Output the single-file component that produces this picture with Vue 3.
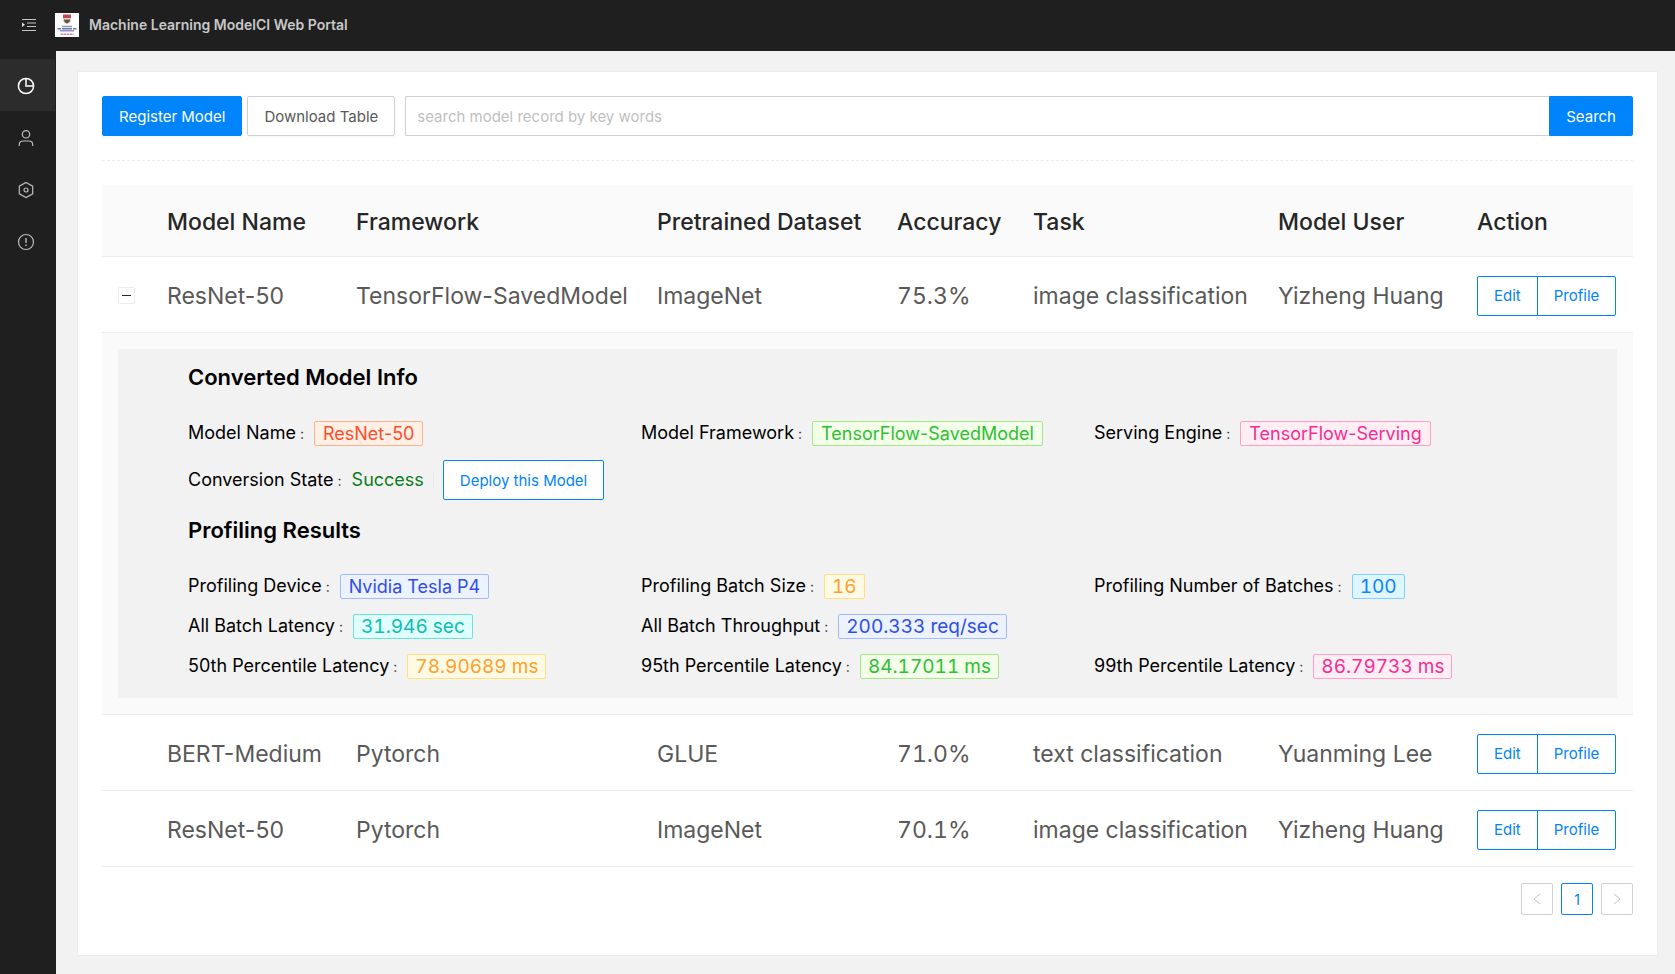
<script setup>
import { ref } from 'vue'

const keywords = ref('')
const expanded = ref(true)

const columns = ['Model Name', 'Framework', 'Pretrained Dataset', 'Accuracy', 'Task', 'Model User', 'Action']

const models = [
  {
    id: 1,
    cells: ['ResNet-50', 'TensorFlow-SavedModel', 'ImageNet', '75.3%', 'image classification', 'Yizheng Huang'],
    detail: true,
  },
  {
    id: 2,
    cells: ['BERT-Medium', 'Pytorch', 'GLUE', '71.0%', 'text classification', 'Yuanming Lee'],
  },
  {
    id: 3,
    cells: ['ResNet-50', 'Pytorch', 'ImageNet', '70.1%', 'image classification', 'Yizheng Huang'],
  },
]

const conversion = [
  { label: 'Model Name', value: 'ResNet-50', tone: 'volcano' },
  { label: 'Model Framework', value: 'TensorFlow-SavedModel', tone: 'green' },
  { label: 'Serving Engine', value: 'TensorFlow-Serving', tone: 'magenta' },
]

const profiling = [
  { label: 'Profiling Device', value: 'Nvidia Tesla P4', tone: 'geekblue' },
  { label: 'Profiling Batch Size', value: '16', tone: 'gold', numeric: true },
  { label: 'Profiling Number of Batches', value: '100', tone: 'blue', numeric: true },
  { label: 'All Batch Latency', value: '31.946 sec', tone: 'cyan', numeric: true },
  { label: 'All Batch Throughput', value: '200.333 req/sec', tone: 'geekblue', numeric: true, wide: true },
  { label: '50th Percentile Latency', value: '78.90689 ms', tone: 'gold', numeric: true },
  { label: '95th Percentile Latency', value: '84.17011 ms', tone: 'green', numeric: true },
  { label: '99th Percentile Latency', value: '86.79733 ms', tone: 'magenta', numeric: true },
]
</script>

<template>
  <div class="app">
    <header class="topbar">
      <button class="fold" type="button" aria-label="Toggle menu">
        <svg width="14" height="12" viewBox="0 0 14 12" fill="none" stroke="#c4c4c4">
          <path d="M0 .5h14M5 4h9M5 7.500h9M0 11.500h14" />
          <path d="M0 3.500v4.600L3 5.800z" fill="#e0e0e0" stroke="none" />
        </svg>
      </button>
      <svg class="logo" width="24" height="24" viewBox="0 0 24 24">
        <rect width="24" height="24" fill="#fff" />
        <path d="M8 1.500h8v3.500H8z" fill="#c2485a" />
        <path d="M8 5h8v2.500q0 2-4 3.500q-4-1.500-4-3.500z" fill="#e2d3b8" />
        <path d="M9 6l2 1 1-1 1 1 2-1-.5 3L12 10.500l-2.500-1.500z" fill="#6b5140" />
        <path d="M7 13.500h10M5 17.800h14" stroke="#8d94bc" stroke-width="1.500" />
        <path d="M2.500 15.700h3.500M7 15.700h10M18 15.700h3.500" stroke="#6b75ab" stroke-width="1.600" />
        <path d="M5.500 21.300h13" stroke="#e8829a" stroke-width="1.400" stroke-dasharray="2.500 .5" />
      </svg>
      <h1 class="brand">Machine Learning ModelCI Web Portal</h1>
    </header>

    <div class="body">
      <nav class="sidebar" aria-label="Main">
        <a class="nav active" href="#dashboard" aria-label="Dashboard">
          <svg width="18" height="18" viewBox="0 0 18 18" fill="none" stroke="#fff" stroke-width="1.500">
            <circle cx="9" cy="9" r="7.600" />
            <path d="M9 1.400V9h7.600" />
          </svg>
        </a>
        <a class="nav" href="#users" aria-label="Users">
          <svg width="18" height="18" viewBox="0 0 18 18" fill="none" stroke="#bdbdbd" stroke-width="1.200">
            <circle cx="9" cy="5.300" r="3.700" />
            <path d="M2.300 17v-1.500q0-3.500 4-3.500h5.400q4 0 4 3.500V17" />
          </svg>
        </a>
        <a class="nav" href="#services" aria-label="Services">
          <svg width="18" height="18" viewBox="0 0 18 18" fill="none" stroke="#bdbdbd" stroke-width="1.200">
            <path d="M9 1.500l6.700 3.700v7.600L9 16.500l-6.700-3.700V5.200z" />
            <circle cx="9" cy="9" r="2" />
          </svg>
        </a>
        <a class="nav" href="#about" aria-label="About">
          <svg width="18" height="18" viewBox="0 0 18 18" fill="none" stroke="#bdbdbd" stroke-width="1.200">
            <circle cx="9" cy="9" r="7.500" />
            <path d="M9 5v5M9 11.500v1.500" stroke-width="1.400" />
          </svg>
        </a>
      </nav>

      <main class="content">
        <section class="card">
          <div class="toolbar">
            <button class="btn primary" type="button">Register Model</button>
            <button class="btn" type="button">Download Table</button>
            <form class="search" @submit.prevent>
              <input v-model="keywords" type="text" aria-label="Search models" placeholder="search model record by key words" />
              <button class="btn primary" type="submit">Search</button>
            </form>
          </div>
          <hr class="divider" />

          <table class="models">
            <colgroup>
              <col class="c-toggle" />
              <col class="c-name" />
              <col class="c-framework" />
              <col class="c-dataset" />
              <col class="c-accuracy" />
              <col class="c-task" />
              <col class="c-user" />
              <col class="c-action" />
            </colgroup>
            <thead>
              <tr>
                <th></th>
                <th v-for="name in columns" :key="name" scope="col">{{ name }}</th>
              </tr>
            </thead>
            <tbody>
              <template v-for="model in models" :key="model.id">
                <tr>
                  <td>
                    <button
                      v-if="model.detail"
                      class="toggle"
                      type="button"
                      :aria-expanded="expanded"
                      aria-label="Toggle details"
                      @click="expanded = !expanded"
                    >
                      <svg width="9" height="9" viewBox="0 0 9 9" stroke="#262626"><path d="M0 4.500h9" /></svg>
                    </button>
                  </td>
                  <td v-for="(cell, i) in model.cells" :key="i" :class="{ figures: columns[i] === 'Accuracy' }">{{ cell }}</td>
                  <td>
                    <div class="group">
                      <button class="btn ghost" type="button">Edit</button>
                      <button class="btn ghost" type="button">Profile</button>
                    </div>
                  </td>
                </tr>
                <tr v-if="model.detail && expanded" class="detail-row">
                  <td colspan="8">
                    <div class="detail">
                      <h2>Converted Model Info</h2>
                      <dl class="facts">
                        <div v-for="fact in conversion" :key="fact.label" class="fact">
                          <dt>{{ fact.label }}</dt>
                          <dd><span class="tag" :class="fact.tone">{{ fact.value }}</span></dd>
                        </div>
                        <div class="fact state">
                          <dt>Conversion State</dt>
                          <dd>
                            <span class="success">Success</span>
                            <span class="bar"></span>
                            <button class="btn ghost" type="button">Deploy this Model</button>
                          </dd>
                        </div>
                      </dl>
                      <h2>Profiling Results</h2>
                      <dl class="facts">
                        <div v-for="fact in profiling" :key="fact.label" class="fact" :class="{ wide: fact.wide }">
                          <dt>{{ fact.label }}</dt>
                          <dd><span class="tag" :class="[fact.tone, { numeric: fact.numeric }]">{{ fact.value }}</span></dd>
                        </div>
                      </dl>
                    </div>
                  </td>
                </tr>
              </template>
            </tbody>
          </table>

          <nav class="pager" aria-label="Pagination">
            <button type="button" disabled aria-label="Previous page">
              <svg width="8" height="12" viewBox="0 0 8 12" fill="none" stroke="#c4c4c4"><path d="M7 1L1 6l6 5" /></svg>
            </button>
            <button class="current" type="button" aria-current="page">1</button>
            <button type="button" disabled aria-label="Next page">
              <svg width="8" height="12" viewBox="0 0 8 12" fill="none" stroke="#c4c4c4"><path d="M1 1l6 5-6 5" /></svg>
            </button>
          </nav>
        </section>
      </main>
    </div>
  </div>
</template>

<style>
body {
  background: #f2f2f2;
}
</style>

<style scoped>
.app,
.app * {
  box-sizing: border-box;
}
.app {
  display: flex;
  flex-direction: column;
  min-height: 100vh;
  font-family: Inter, "Noto Sans", sans-serif;
  font-size: 16px;
  color: #595959;
}
button,
input {
  font-family: inherit;
}
.topbar {
  display: flex;
  align-items: center;
  height: 51px;
  padding: 0 22px 2px;
  background: #1f1f1f;
  box-shadow: 0 1px 4px rgba(0, 21, 41, 0.12);
}
.fold {
  display: flex;
  padding: 0;
  border: 0;
  background: none;
}
.logo {
  margin-left: 19px;
}
.brand {
  margin: 0 0 0 10px;
  font-size: 14px;
  font-weight: 600;
  color: #c8c8c8;
}
.body {
  flex: 1;
  display: flex;
}
.sidebar {
  flex: none;
  width: 56px;
  padding: 8px 1px 0 0;
  background: #1f1f1f;
}
.nav {
  display: flex;
  align-items: center;
  justify-content: center;
  height: 52px;
  padding: 2px 3px 0 0;
}
.nav.active {
  background: #2c2c2c;
}
.content {
  flex: 1;
  min-width: 0;
  padding: 20px 17px 18px 21px;
  background: #f2f2f2;
}
.card {
  height: 100%;
  padding: 24px;
  border: 1px solid #ececec;
  background: #fff;
}
.toolbar {
  display: flex;
  gap: 5px;
}
.btn {
  height: 40px;
  padding: 0 16px;
  border: 1px solid #d0d0d0;
  border-radius: 2px;
  background: #fff;
  font-size: 15px;
  color: #595959;
  white-space: nowrap;
  box-shadow: 0 2px 0 rgba(0, 0, 0, 0.02);
}
.btn.primary {
  border-color: #0084fc;
  background: #0084fc;
  color: #fff;
}
.btn.ghost {
  border-color: #0084fc;
  color: #0084fc;
  box-shadow: none;
}
.search {
  flex: 1;
  display: flex;
  margin-left: 5px;
}
.search input {
  flex: 1;
  min-width: 0;
  height: 40px;
  padding: 0 11px;
  border: 1px solid #d0d0d0;
  border-right: 0;
  border-radius: 2px 0 0 2px;
  font-size: 15px;
  color: #595959;
}
.search input::placeholder {
  color: #bfbfbf;
}
.search .btn {
  border-radius: 0 2px 2px 0;
}
.divider {
  margin: 24px 0;
  border: 0;
  border-top: 1px dashed #ececec;
}
.models {
  width: 100%;
  border-collapse: separate;
  border-spacing: 0;
  table-layout: fixed;
  font-size: 23px;
  line-height: 36px;
}
.c-toggle { width: 49px; }
.c-name { width: 189px; }
.c-framework { width: 301px; }
.c-dataset { width: 240px; }
.c-accuracy { width: 136px; }
.c-task { width: 245px; }
.c-user { width: 199px; }
.c-action { width: 172px; }
.models th,
.models td {
  height: 76px;
  padding: 2px 16px 0;
  border-bottom: 1px solid #ececec;
  text-align: left;
  white-space: nowrap;
}
.models th {
  height: 72px;
  background: #fafafa;
  font-weight: 500;
  color: #262626;
}
.figures {
  font-variant-numeric: tabular-nums;
}
.toggle {
  display: flex;
  align-items: center;
  justify-content: center;
  width: 17px;
  height: 17px;
  padding: 0;
  border: 1px solid #ececec;
  border-radius: 2px;
  background: #fff;
}
.group {
  display: flex;
}
.group .btn:first-child {
  border-radius: 2px 0 0 2px;
}
.group .btn:last-child {
  margin-left: -1px;
  border-radius: 0 2px 2px 0;
}
.models .detail-row td {
  padding: 16px;
  background: #fafafa;
}
.detail {
  padding: 14px 70px 12px;
  background: #f2f2f2;
  color: #000;
}
.detail h2 {
  margin: 0 0 22px;
  font-size: 22px;
  line-height: 28px;
  font-weight: 600;
}
.facts {
  display: grid;
  grid-template-columns: repeat(3, 1fr);
  margin: 0;
  font-size: 18px;
  line-height: 24px;
}
.facts + h2 {
  margin-top: 9px;
}
.fact {
  display: flex;
  align-items: center;
  height: 40px;
}
.fact.state {
  height: 54px;
}
.fact.wide {
  grid-column: span 2;
}
.fact dt::after {
  content: ":";
  margin: 0 10px 0 4px;
  font-size: 14px;
  color: #333;
}
.fact dd {
  display: flex;
  align-items: center;
  margin: 0;
}
.tag {
  padding: 0 8px;
  border: 1px solid;
  border-radius: 2px;
  line-height: 23px;
}
.tag.numeric {
  padding: 0 7px;
  font-size: 19px;
  font-variant-numeric: tabular-nums;
}
.success {
  color: #0a7d1c;
}
.bar {
  width: 1px;
  height: 14px;
  margin: 0 9px;
  background: #e8e8e8;
}
.volcano { color: #ff4d29; background: #fff0e6; border-color: #ffb08c; }
.green { color: #2fbf34; background: #f3ffe8; border-color: #a4e888; }
.magenta { color: #f72c93; background: #ffeef4; border-color: #ff9fc8; }
.geekblue { color: #2f4de8; background: #ecf2ff; border-color: #a0bcff; }
.gold { color: #ff9f2e; background: #fffae4; border-color: #ffdf80; }
.blue { color: #0a84ff; background: #e0f6ff; border-color: #7ccfff; }
.cyan { color: #0cbcb8; background: #e0fffa; border-color: #66e4d8; }
.pager {
  display: flex;
  justify-content: flex-end;
  gap: 8px;
  margin-top: 16px;
}
.pager button {
  display: flex;
  align-items: center;
  justify-content: center;
  width: 32px;
  height: 32px;
  padding: 0;
  border: 1px solid #d0d0d0;
  border-radius: 2px;
  background: #fff;
  font-size: 14px;
}
.pager .current {
  border-color: #0084fc;
  color: #0084fc;
}
</style>
